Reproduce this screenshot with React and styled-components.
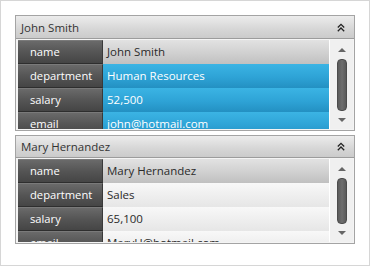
import React from 'react';
import styled, { createGlobalStyle } from 'styled-components';

const GlobalStyle = createGlobalStyle`
  html, body {
    margin: 0;
    padding: 0;
    background: #ffffff;
  }
  body {
    font-family: "Open Sans", "Noto Sans", sans-serif;
  }
`;

const Page = styled.div`
  width: 370px;
  height: 266px;
  box-sizing: border-box;
  border: 1px solid #d6d6d6;
  padding: 14px 14px 0 14px;
  display: flex;
  flex-direction: column;
  gap: 4px;
  background: #ffffff;
`;

const Panel = styled.div`
  border: 1px solid #a4a4a4;
  box-shadow: inset 0 0 0 1px #d8d8d8;
  background: #f2f2f2;
  display: flex;
  flex-direction: column;
`;

const Header = styled.div`
  height: ${p => p.$h}px;
  display: flex;
  align-items: center;
  justify-content: space-between;
  padding: 0 9px 0 5px;
  background: linear-gradient(#ececec, #d6d6d6 60%, #cbcbcb);
  border-bottom: 1px solid #9c9c9c;
  font-size: 11.5px;
  color: #333;
`;

const Body = styled.div`
  height: ${p => p.$h}px;
  box-sizing: border-box;
  display: flex;
  padding: 1px 1px 1px 2px;
  background: #f4f4f4;
  overflow: hidden;
`;

const Grid = styled.div`
  flex: 1;
  display: grid;
  grid-template-columns: 85px 1fr;
  grid-auto-rows: 24px;
  align-content: start;
  overflow: hidden;
`;

const Label = styled.div`
  display: flex;
  align-items: center;
  padding-left: 12px;
  padding-bottom: 1px;
  color: #ffffff;
  font-size: 11.2px;
  background: linear-gradient(#6a6a6a, #555555 50%, #454545);
  border-top: 1px solid #7a7a7a;
  border-bottom: 1px solid #2e2e2e;
  border-right: 1px solid #3a3a3a;
  box-sizing: border-box;
`;

const tones = {
  head: 'linear-gradient(#e2e2e2, #d0d0d0 55%, #c0c0c0)',
  blue: 'linear-gradient(#3bb4e4, #2ea3d6 55%, #2390c2)',
  plain: 'linear-gradient(#f8f8f8, #eeeeee 55%, #e6e6e6)',
};

const Value = styled.div`
  display: flex;
  align-items: center;
  padding-left: 4px;
  padding-bottom: 1px;
  font-size: 11.5px;
  color: ${p => (p.$tone === 'blue' ? '#ffffff' : '#2a2a2a')};
  background: ${p => tones[p.$tone]};
  box-sizing: border-box;
  white-space: nowrap;
`;

const Scroll = styled.div`
  width: 24px;
  display: flex;
  flex-direction: column;
  align-items: center;
  background: #f0f0f0;
  border-left: 1px solid #ffffff;
  padding: 5px 0 4px;
  box-sizing: border-box;
`;

const Arrow = styled.div`
  width: 0;
  height: 0;
  border-left: 4px solid transparent;
  border-right: 4px solid transparent;
  ${p => (p.$down ? 'border-top: 4px solid #666;' : 'border-bottom: 4px solid #666;')}
  margin: 3px 0;
`;

const Thumb = styled.div`
  flex: 1;
  width: 10px;
  margin: 4px 0;
  border-radius: 4px;
  background: linear-gradient(90deg, #5a5a5a, #6e6e6e 50%, #5a5a5a);
  border: 1px solid #4c4c4c;
  box-sizing: border-box;
`;

const Collapse = () => (
  <svg width="8" height="9" viewBox="0 0 8 9" fill="none" stroke="#222" strokeWidth="1.3">
    <path d="M0.8 4.5 L4 1.3 L7.2 4.5" />
    <path d="M0.8 8.2 L4 5 L7.2 8.2" />
  </svg>
);

const people = [
  {
    title: 'John Smith',
    headH: 22,
    bodyH: 91,
    selected: true,
    rows: [
      ['name', 'John Smith'],
      ['department', 'Human Resources'],
      ['salary', '52,500'],
      ['email', 'john@hotmail.com'],
    ],
  },
  {
    title: 'Mary Hernandez',
    headH: 21,
    bodyH: 85,
    selected: false,
    rows: [
      ['name', 'Mary Hernandez'],
      ['department', 'Sales'],
      ['salary', '65,100'],
      ['email', 'MaryH@hotmail.com'],
    ],
  },
];

const Card = ({ person }) => (
  <Panel>
    <Header $h={person.headH}>
      <span>{person.title}</span>
      <Collapse />
    </Header>
    <Body $h={person.bodyH}>
      <Grid>
        {person.rows.map(([k, v], i) => (
          <React.Fragment key={k}>
            <Label>{k}</Label>
            <Value $tone={i === 0 ? 'head' : person.selected ? 'blue' : 'plain'}>{v}</Value>
          </React.Fragment>
        ))}
      </Grid>
      <Scroll>
        <Arrow />
        <Thumb />
        <Arrow $down />
      </Scroll>
    </Body>
  </Panel>
);

export default function App() {
  return (
    <>
      <GlobalStyle />
      <Page>
        {people.map(p => (
          <Card key={p.title} person={p} />
        ))}
      </Page>
    </>
  );
}
